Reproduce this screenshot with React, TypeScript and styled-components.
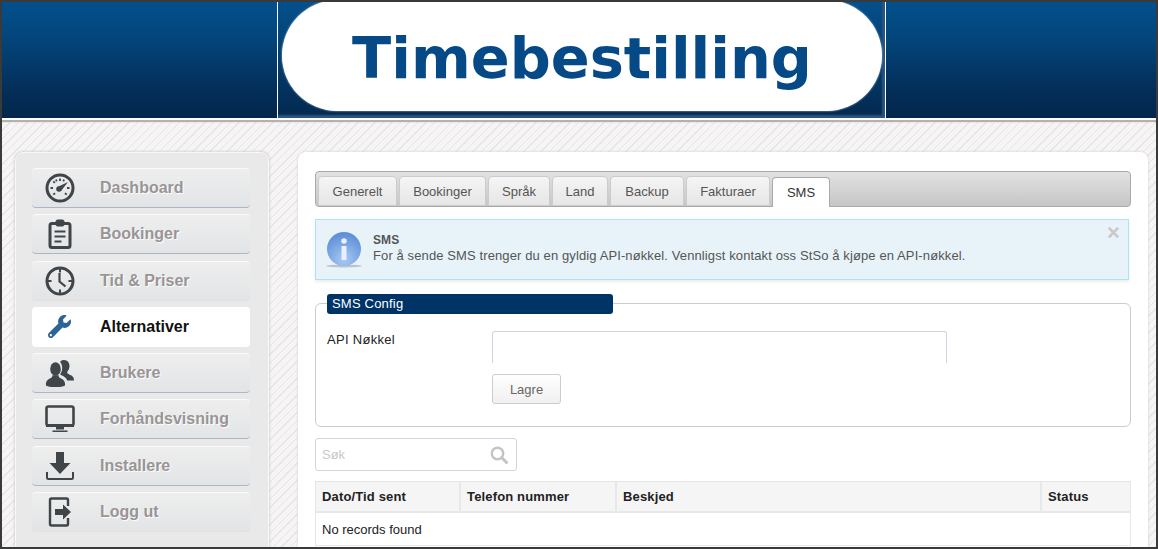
import styled, { createGlobalStyle } from "styled-components";
import { FaWrench } from "react-icons/fa";

const GlobalStyle = createGlobalStyle`
  html, body {
    margin: 0;
    padding: 0;
    background: #fff;
    font-family: "Liberation Sans", Arial, sans-serif;
  }
`;

const Frame = styled.div`
  box-sizing: border-box;
  width: 1158px;
  height: 549px;
  border: 2px solid #3a3a3a;
  overflow: hidden;
  background-color: #f6f4f5;
  background-image: repeating-linear-gradient(
    -45deg,
    #e6e4e5 0,
    #e6e4e5 1px,
    #f6f4f5 1px,
    #f6f4f5 6px
  );
`;

const Header = styled.header`
  box-sizing: border-box;
  height: 116px;
  display: flex;
  justify-content: center;
  padding-left: 5px;
  background: linear-gradient(#03508d 0%, #03467c 30%, #032c56 80%, #03274c 100%);
  box-shadow: 0 2px 0 #fff, 0 4px 1px #b5b1b1;
`;

const LogoBox = styled.div`
  box-sizing: border-box;
  width: 609px;
  height: 116px;
  border-left: 1px solid #fff;
  border-right: 1px solid #fff;
  padding: 0 3px 0 4px;
  background: linear-gradient(#04508c, #03294f);
  box-shadow: inset -3px -3px 2px #2a5680;
`;

const LogoPill = styled.div`
  box-sizing: border-box;
  height: 111px;
  margin-top: -2px;
  padding-top: 5px;
  border-radius: 58px;
  background: #fff;
  box-shadow: 0 0 2px #c9d7e6;
  display: flex;
  align-items: center;
  justify-content: center;
  color: #054a86;
  font-family: "DejaVu Sans", Verdana, sans-serif;
  font-weight: 700;
  font-size: 57.4px;
`;

const Content = styled.div`
  display: flex;
  align-items: flex-start;
  gap: 29px;
  padding: 34px 8px 0 13px;
`;

const Sidebar = styled.nav`
  box-sizing: border-box;
  width: 254px;
  height: 420px;
  flex: none;
  padding: 15px 18px 15px 16px;
  display: flex;
  flex-direction: column;
  gap: 6.25px;
  background: #e9e9e9;
  border: 1px solid #f8f8f8;
  border-radius: 8px;
  box-shadow: 0 0 3px #bdbdbd;
`;

const NavItem = styled.a<{ $active?: boolean; $plain?: boolean }>`
  box-sizing: border-box;
  height: 40px;
  flex: none;
  display: grid;
  grid-template-columns: 55px 1fr;
  column-gap: 13px;
  align-items: center;
  border-radius: 4px;
  font-size: 16px;
  font-weight: 700;
  color: ${(p) => (p.$active ? "#111" : "#9a9494")};
  text-shadow: ${(p) => (p.$active ? "none" : "1px 1px 1px #fff")};
  background: ${(p) => (p.$active ? "#fff" : "linear-gradient(#eeeeee, #e2e4e6)")};
  border-top: 1px solid ${(p) => (p.$active ? "#fff" : "#fafafa")};
  border-bottom: 1px solid ${(p) => (p.$active ? "#fff" : p.$plain ? "#dfe1e3" : "#a9b7c6")};
`;

const NavIcon = styled.span<{ $active?: boolean }>`
  display: flex;
  justify-content: center;
  color: ${(p) => (p.$active ? "#2c6496" : "#3f4549")};
  svg {
    display: block;
  }
`;

const Main = styled.main`
  box-sizing: border-box;
  width: 850px;
  height: 420px;
  flex: none;
  padding: 19px 17px 0;
  background: #fff;
  border-radius: 8px;
  box-shadow: 0 0 3px #d0d0d0;
`;

const TabBar = styled.div`
  box-sizing: border-box;
  height: 36px;
  display: flex;
  align-items: flex-end;
  gap: 2px;
  padding-left: 2px;
  border: 1px solid #aaa;
  border-radius: 4px;
  background: linear-gradient(#e2e2e2, #c6c6c6);
`;

const Tab = styled.div<{ $active?: boolean; $width: number }>`
  box-sizing: border-box;
  width: ${(p) => p.$width}px;
  height: 30px;
  margin-bottom: ${(p) => (p.$active ? "-1px" : "0")};
  display: flex;
  align-items: center;
  justify-content: center;
  font-size: 13px;
  color: ${(p) => (p.$active ? "#333" : "#555")};
  background: ${(p) => (p.$active ? "#fff" : "linear-gradient(#f5f5f5, #e6e6e6)")};
  border: 1px solid ${(p) => (p.$active ? "#aaa" : "#ccc")};
  border-bottom: ${(p) => (p.$active ? "none" : "1px solid #ccc")};
  border-radius: 4px 4px 0 0;
`;

const Alert = styled.div`
  box-sizing: border-box;
  position: relative;
  width: 814px;
  height: 61px;
  margin-top: 12px;
  display: flex;
  align-items: center;
  gap: 11px;
  padding-left: 10px;
  background: #e8f3f9;
  border: 1px solid #a9e3f8;
  box-shadow: 0 2px 3px #eee;
  font-size: 13px;
  line-height: 15px;
  letter-spacing: 0.11px;
  color: #555;
`;

const AlertText = styled.div`
  margin-bottom: 4px;
`;

const AlertTitle = styled.div`
  font-weight: 700;
  font-size: 12px;
`;

const Close = styled.span`
  position: absolute;
  top: 3px;
  right: 8px;
  font-size: 22px;
  font-weight: 700;
  line-height: 20px;
  color: #c8c8c8;
`;

const Fieldset = styled.section`
  box-sizing: border-box;
  height: 124px;
  margin-top: 23px;
  padding: 0 11px;
  border: 1px solid #ccc;
  border-radius: 6px;
`;

const Legend = styled.div`
  box-sizing: border-box;
  width: 286px;
  height: 20px;
  margin-top: -10px;
  padding-left: 5px;
  line-height: 20px;
  font-size: 13px;
  letter-spacing: 0.2px;
  color: #fff;
  background: #003366;
  border-radius: 3px;
`;

const FormRow = styled.div`
  display: grid;
  grid-template-columns: 165px 455px;
  margin-top: 18px;
  font-size: 13px;
  letter-spacing: 0.3px;
  color: #222;
  line-height: 16px;
`;

const KeyInput = styled.div`
  box-sizing: border-box;
  height: 32px;
  margin-top: -1px;
  border: 1px solid #ccd6e2;
  border-bottom: none;
  border-radius: 3px 3px 0 0;
`;

const SaveButton = styled.button`
  box-sizing: border-box;
  display: block;
  width: 69px;
  height: 30px;
  margin: 11px 0 0 165px;
  padding: 0;
  font-family: inherit;
  font-size: 13px;
  color: #666;
  background: linear-gradient(#fff, #f1efef);
  border: 1px solid #ccc;
  border-radius: 3px;
`;

const Search = styled.div`
  box-sizing: border-box;
  width: 202px;
  height: 33px;
  margin-top: 11px;
  padding: 0 8px 0 6px;
  display: flex;
  align-items: center;
  justify-content: space-between;
  font-size: 13px;
  color: #c8c8c8;
  border: 1px solid #ccd6e2;
  border-radius: 3px;
`;

const Table = styled.table`
  width: 816px;
  margin-top: 10px;
  border-collapse: separate;
  border-spacing: 0;
  table-layout: fixed;
  font-size: 13px;
  color: #222;
  border-top: 1px solid #e5e5e5;
  border-left: 1px solid #e5e5e5;
`;

const Th = styled.th<{ $width: number }>`
  box-sizing: border-box;
  width: ${(p) => p.$width}px;
  height: 31px;
  padding: 0 6px;
  text-align: left;
  font-weight: 700;
  letter-spacing: 0.15px;
  background: #f5f5f5;
  border-right: 2px solid #e8e8e8;
  border-bottom: 2px solid #e8e8e8;
  &:last-child {
    border-right: 1px solid #e8e8e8;
  }
`;

const Td = styled.td`
  box-sizing: border-box;
  height: 33px;
  padding: 0 6px;
  border-right: 1px solid #e8e8e8;
  border-bottom: 1px solid #e8e8e8;
`;

const GaugeIcon = () => (
  <svg width="30" height="30" viewBox="0 0 30 30" fill="none" stroke="currentColor">
    <circle cx="15" cy="15" r="13" strokeWidth="3" />
    <path d="M15 5.500v2.500M8.300 8.300l1.600 1.600M5.500 15h2.500M22 15h2.500M8.300 21.500l1.800-1.200M21.700 21.500l-1.800-1.200M11 6.500l.7 1.800M19 6.500l-.7 1.800" strokeWidth="1.800" />
    <path d="M12.500 14 23 9 16 18z" fill="currentColor" stroke="none" />
    <circle cx="14" cy="16" r="2.800" fill="currentColor" stroke="none" />
  </svg>
);

const ClipboardIcon = () => (
  <svg width="24" height="30" viewBox="0 0 24 30" fill="none" stroke="currentColor">
    <rect x="2" y="4.500" width="20" height="24" rx="2" strokeWidth="3" />
    <rect x="8" y="1" width="8" height="6" rx="1.500" fill="currentColor" strokeWidth="1" />
    <path d="M6.500 12.500h11M6.500 17.500h11M6.500 22.500h7" strokeWidth="2.200" />
  </svg>
);

const ClockIcon = () => (
  <svg width="30" height="30" viewBox="0 0 30 30" fill="none" stroke="currentColor">
    <circle cx="15" cy="15" r="13" strokeWidth="3" />
    <path d="M15 3v3.500M15 23.500V27M3 15h3.500M23.500 15H27" strokeWidth="2" />
    <path d="M14.500 7v8.500l6 5" strokeWidth="2.200" />
  </svg>
);

const UsersIcon = () => (
  <svg width="30" height="28" viewBox="0 0 30 28" fill="currentColor">
    <path d="M19 1c3.500 0 5.500 2.800 5.500 6 0 2.300-.9 4.400-2.300 5.800-.3 1.300.4 1.900 2 2.600 2.600 1 4.800 2.200 4.800 5.600v.6h-6.800c-.9-3-3.400-4.300-5.800-5.300-.9-.4-1.200-.8-1-1.600 1.200-1.500 1.800-3.500 1.800-5.700 0-2.400-.8-4.500-2.100-5.900C16 1.400 17.300 1 19 1z" />
    <ellipse cx="10.500" cy="10" rx="5.300" ry="6.700" />
    <path d="M1 26.500c-.5-4 1.300-6 4-7.100 1.900-.8 2.500-1.500 2.300-3.200h6.400c-.2 1.700.4 2.400 2.300 3.200 2.700 1.100 4.500 3.100 4 7.100-1 .9-2.900 1.500-9.500 1.500S2 27.400 1 26.500z" />
  </svg>
);

const MonitorIcon = () => (
  <svg width="30" height="28" viewBox="0 0 30 28" fill="none" stroke="currentColor">
    <rect x="1.500" y="1.500" width="27" height="19" rx="2" strokeWidth="2.600" />
    <path d="M1 19h28v3H1z" fill="currentColor" stroke="none" />
    <path d="M11 22h8v2.500h-8zM7.500 25.500h15V27h-15z" fill="currentColor" stroke="none" />
  </svg>
);

const DownloadIcon = () => (
  <svg width="30" height="30" viewBox="0 0 30 30" fill="none">
    <path d="M11 1h8v11h6.500L15 23 4.500 12H11z" fill="currentColor" />
    <path d="M2 21v5.500c0 1 .6 1.500 1.500 1.500h23c.9 0 1.500-.5 1.500-1.500V21" stroke="currentColor" strokeWidth="2" />
  </svg>
);

const LogoutIcon = () => (
  <svg width="24" height="30" viewBox="0 0 24 30" fill="none">
    <path d="M20 9V3c0-1-.5-1.500-1.500-1.500h-15C2.500 1.500 2 2 2 3v24c0 1 .5 1.500 1.500 1.500h15c1 0 1.500-.5 1.500-1.500v-6" stroke="currentColor" strokeWidth="2.400" />
    <path d="M7 12h8V7.500l8 7.500-8 7.500V18H7z" fill="currentColor" />
  </svg>
);

const InfoIcon = () => (
  <svg width="36" height="36" viewBox="0 0 36 36">
    <defs>
      <radialGradient id="infoFill" cx="50%" cy="80%" r="75%">
        <stop offset="0" stopColor="#a9c9f3" />
        <stop offset="1" stopColor="#5d8fd8" />
      </radialGradient>
    </defs>
    <ellipse cx="18" cy="34" rx="18" ry="1.500" fill="#b9c3c9" />
    <circle cx="18" cy="17" r="17" fill="url(#infoFill)" />
    <circle cx="18" cy="9" r="2.800" fill="#e8f0fb" />
    <rect x="15.500" y="14" width="5" height="14" fill="#e8f0fb" />
  </svg>
);

const SearchIcon = () => (
  <svg width="18" height="18" viewBox="0 0 18 18" fill="none" stroke="#c4c4c4">
    <circle cx="7.500" cy="7.500" r="5.700" strokeWidth="2.400" />
    <path d="M11.800 11.800 16.500 16.500" strokeWidth="3" strokeLinecap="round" />
  </svg>
);

const navItems = [
  { label: "Dashboard", icon: <GaugeIcon /> },
  { label: "Bookinger", icon: <ClipboardIcon /> },
  { label: "Tid & Priser", icon: <ClockIcon />, plain: true },
  { label: "Alternativer", icon: <FaWrench size={23} />, active: true },
  { label: "Brukere", icon: <UsersIcon /> },
  { label: "Forhåndsvisning", icon: <MonitorIcon /> },
  { label: "Installere", icon: <DownloadIcon /> },
  { label: "Logg ut", icon: <LogoutIcon />, plain: true },
];

const tabs = [
  { label: "Generelt", width: 79 },
  { label: "Bookinger", width: 87 },
  { label: "Språk", width: 62 },
  { label: "Land", width: 56 },
  { label: "Backup", width: 74 },
  { label: "Fakturaer", width: 84 },
  { label: "SMS", width: 58, active: true },
];

export default function App() {
  return (
    <>
      <GlobalStyle />
      <Frame>
        <Header>
          <LogoBox>
            <LogoPill>Timebestilling</LogoPill>
          </LogoBox>
        </Header>
        <Content>
          <Sidebar>
            {navItems.map((item) => (
              <NavItem key={item.label} $active={item.active} $plain={item.plain}>
                <NavIcon $active={item.active}>{item.icon}</NavIcon>
                {item.label}
              </NavItem>
            ))}
          </Sidebar>
          <Main>
            <TabBar>
              {tabs.map((tab) => (
                <Tab key={tab.label} $width={tab.width} $active={tab.active}>
                  {tab.label}
                </Tab>
              ))}
            </TabBar>
            <Alert>
              <InfoIcon />
              <AlertText>
                <AlertTitle>SMS</AlertTitle>
                For å sende SMS trenger du en gyldig API-nøkkel. Vennligst kontakt oss StSo å kjøpe en API-nøkkel.
              </AlertText>
              <Close>×</Close>
            </Alert>
            <Fieldset>
              <Legend>SMS Config</Legend>
              <FormRow>
                <span>API Nøkkel</span>
                <KeyInput />
              </FormRow>
              <SaveButton>Lagre</SaveButton>
            </Fieldset>
            <Search>
              Søk
              <SearchIcon />
            </Search>
            <Table>
              <thead>
                <tr>
                  <Th $width={145}>Dato/Tid sent</Th>
                  <Th $width={156}>Telefon nummer</Th>
                  <Th $width={425}>Beskjed</Th>
                  <Th $width={89}>Status</Th>
                </tr>
              </thead>
              <tbody>
                <tr>
                  <Td colSpan={4}>No records found</Td>
                </tr>
              </tbody>
            </Table>
          </Main>
        </Content>
      </Frame>
    </>
  );
}
